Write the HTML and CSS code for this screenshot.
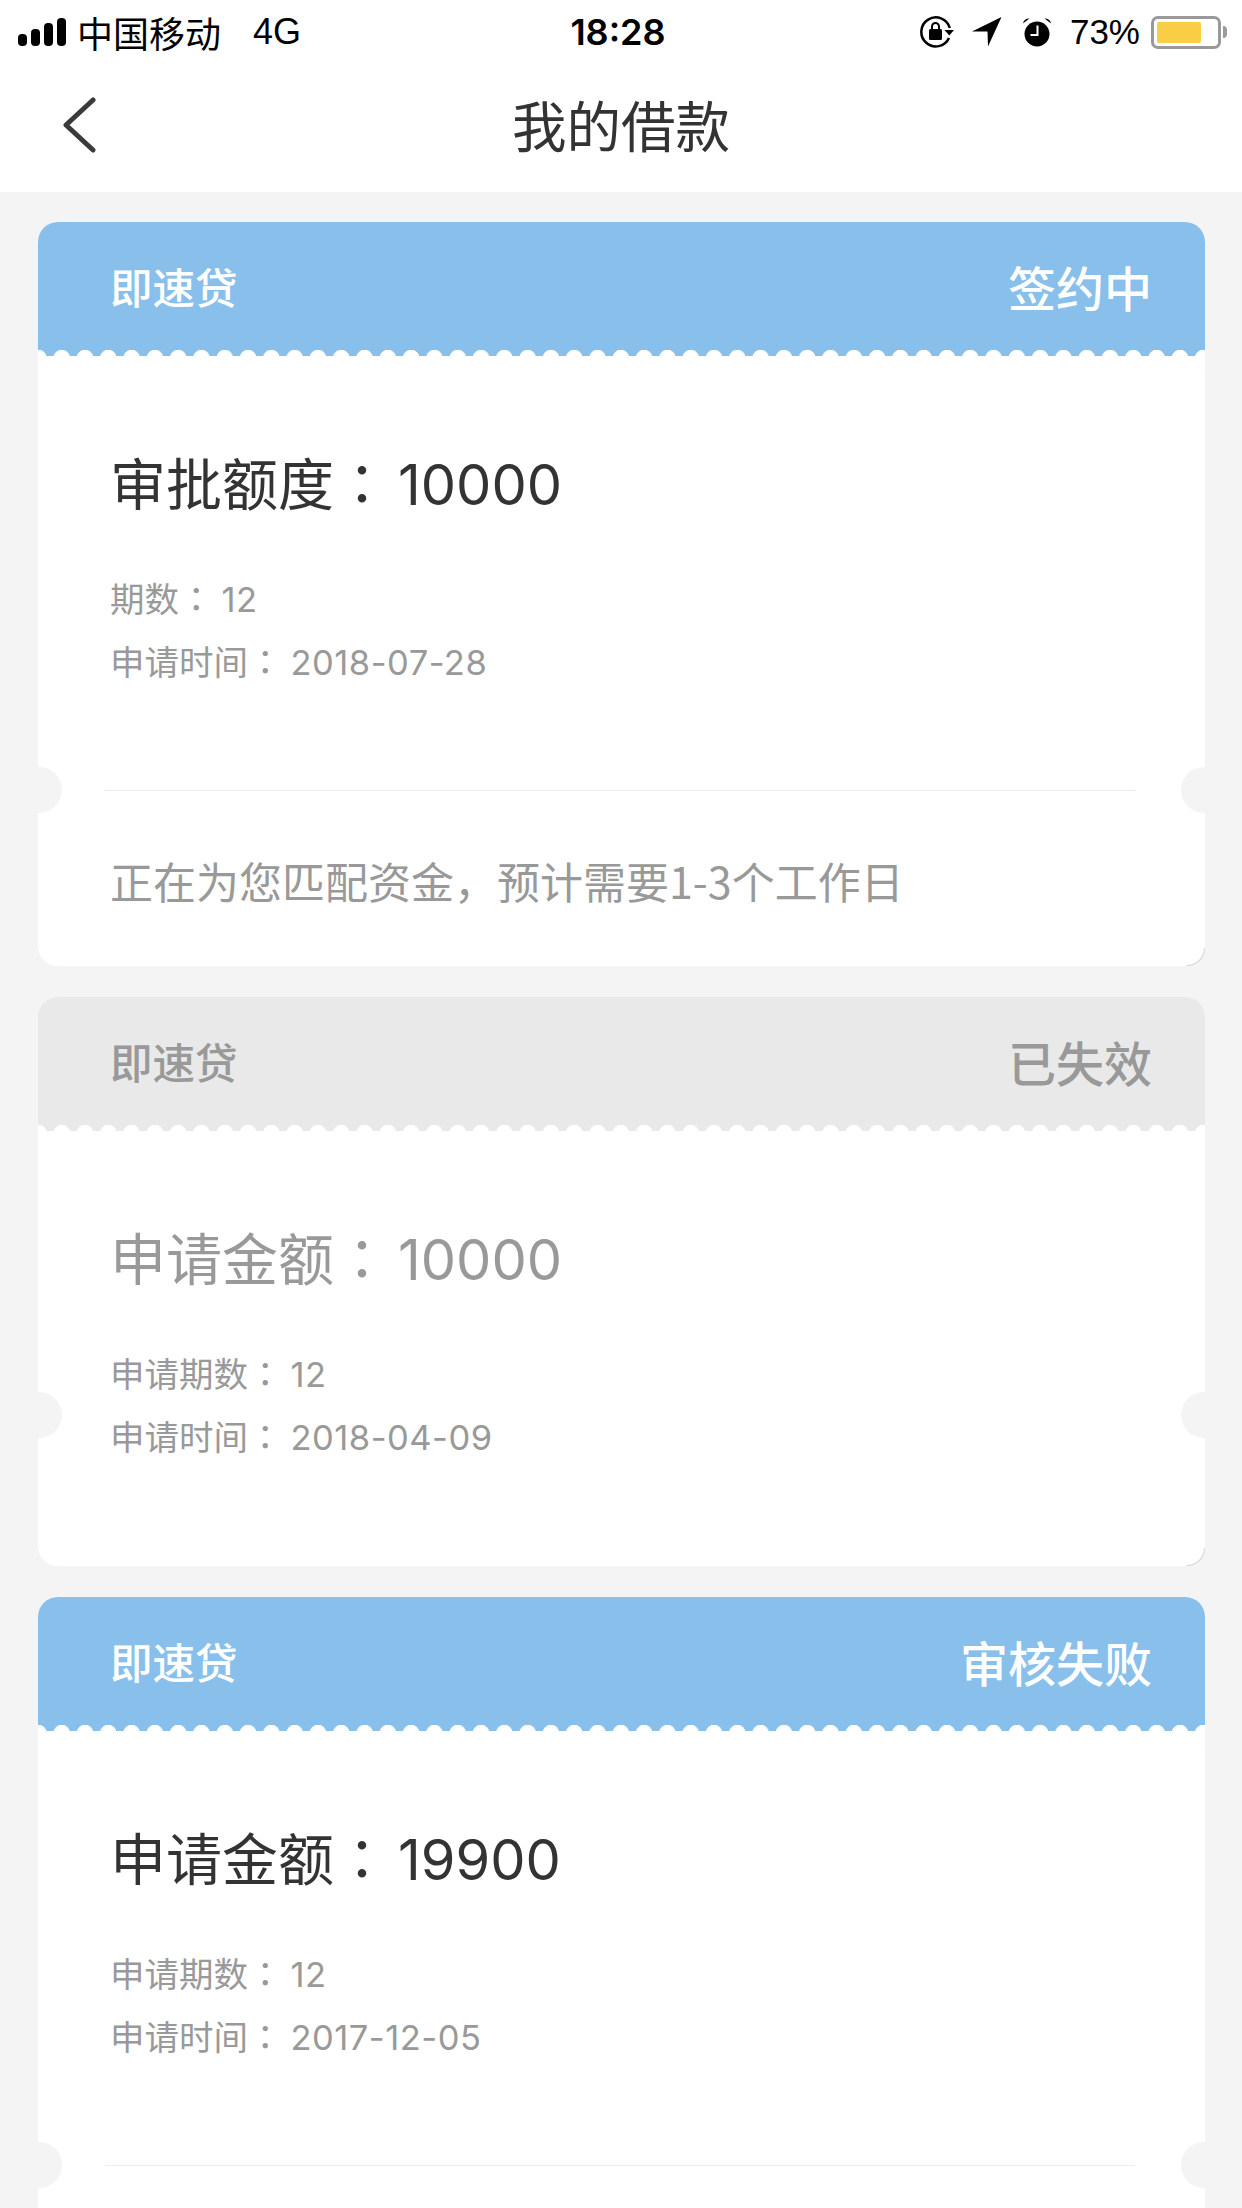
FILE: index.html
```html
<!DOCTYPE html>
<html>
<head>
    <title>我的借款</title>
    <meta charset="utf-8">
    <link rel="stylesheet" href="styles.css">
</head>
<body>
    <div class="status-bar">
        <div class="status-left">
            <svg class="signal" width="48" height="28" viewBox="0 0 48 28">
                <rect x="0" y="16" width="9" height="12" rx="4"/>
                <rect x="13" y="11" width="9" height="17" rx="4"/>
                <rect x="26" y="5" width="9" height="23" rx="4"/>
                <rect x="39" y="0" width="9" height="28" rx="4"/>
            </svg>
            <span class="carrier">中国移动</span>
            <span class="network">4G</span>
        </div>
        <div class="status-time">18:28</div>
        <div class="status-right">
            <svg class="icon-lock" width="35" height="32" viewBox="0 0 35 32">
                <path d="M29 22A14.5 14.5 0 1 1 29.800 12" fill="none" stroke="#000" stroke-width="2.500"/>
                <path d="M24.500 14h9.500l-4.700 5.500z"/>
                <rect x="9" y="13" width="13" height="11" rx="1.500"/>
                <path d="M12 14V10.500a3.500 3.500 0 0 1 7 0V14" fill="none" stroke="#000" stroke-width="2"/>
            </svg>
            <svg class="icon-arrow" width="30" height="30" viewBox="0 0 30 30">
                <path d="M0 14.500 29.500 0 16 29.500 15.500 14.500z"/>
            </svg>
            <svg class="icon-alarm" width="30" height="30" viewBox="0 0 30 30">
                <circle cx="15" cy="17" r="12.500"/>
                <path d="M1 6.500Q2 1.500 7.500 1.500zM29 6.500Q28 1.500 22.500 1.500z"/>
                <path d="M15.500 8.500V18H8.500" fill="none" stroke="#fff" stroke-width="2"/>
            </svg>
            <span class="battery-text">73%</span>
            <div class="battery">
                <div class="battery-fill"></div>
            </div>
            <div class="battery-nub"></div>
        </div>
    </div>

    <div class="nav-bar">
        <svg class="back" width="34" height="56" viewBox="0 0 34 56">
            <path d="M30 3 3 28 30 53" fill="none" stroke="#3a3a3a" stroke-width="5" stroke-linecap="round" stroke-linejoin="round"/>
        </svg>
        <h1>我的借款</h1>
    </div>

    <div class="list">
        <div class="card">
            <div class="card-head">
                <span class="product">即速贷</span>
                <span class="state">签约中</span>
            </div>
            <div class="card-main">
                <p class="amount">审批额度<span class="colon">：</span><span class="num">10000</span></p>
                <p class="meta">期数<span class="colon">：</span><span class="num">12</span></p>
                <p class="meta">申请时间<span class="colon">：</span><span class="num">2018-07-28</span></p>
            </div>
            <div class="tear"><div class="tear-line"></div></div>
            <div class="card-foot">正在为您匹配资金，预计需要1-3个工作日</div>
        </div>

        <div class="card off">
            <div class="card-head">
                <span class="product">即速贷</span>
                <span class="state">已失效</span>
            </div>
            <div class="card-main short">
                <p class="amount">申请金额<span class="colon">：</span><span class="num">10000</span></p>
                <p class="meta">申请期数<span class="colon">：</span><span class="num">12</span></p>
                <p class="meta">申请时间<span class="colon">：</span><span class="num">2018-04-09</span></p>
            </div>
            <div class="tear"></div>
            <div class="card-foot empty"></div>
        </div>

        <div class="card">
            <div class="card-head">
                <span class="product">即速贷</span>
                <span class="state">审核失败</span>
            </div>
            <div class="card-main">
                <p class="amount">申请金额<span class="colon">：</span><span class="num">19900</span></p>
                <p class="meta">申请期数<span class="colon">：</span><span class="num">12</span></p>
                <p class="meta">申请时间<span class="colon">：</span><span class="num">2017-12-05</span></p>
            </div>
            <div class="tear"><div class="tear-line"></div></div>
            <div class="card-foot"></div>
        </div>
    </div>
</body>
</html>
```

FILE: styles.css
```css
html, body {
    margin: 0;
    padding: 0;
}

body {
    width: 1242px;
    height: 2208px;
    overflow: hidden;
    background-color: #f4f4f4;
    font-family: "Noto Sans CJK SC", "Liberation Sans", sans-serif;
    color: #333;
}

/* status bar */
.status-bar {
    display: flex;
    align-items: center;
    justify-content: space-between;
    height: 64px;
    padding: 0 15px 0 18px;
    background-color: #fff;
    color: #000;
    position: relative;
}

.status-left {
    display: flex;
    align-items: center;
}

.carrier {
    font-size: 36px;
    line-height: 60px;
    margin-left: 11px;
}

.network {
    font-family: "Liberation Sans", sans-serif;
    font-size: 36px;
    margin-left: 32px;
}

.status-time {
    position: absolute;
    left: 0;
    right: 0;
    text-align: center;
    font-family: "Inter", "Liberation Sans", sans-serif;
    font-weight: 600;
    font-size: 36px;
    padding-right: 6px;
}

.status-right {
    display: flex;
    align-items: center;
}

.icon-arrow {
    margin-left: 17px;
}

.icon-alarm {
    margin-left: 20px;
}

.battery-text {
    font-family: "Liberation Sans", sans-serif;
    font-size: 35px;
    margin-left: 18px;
}

.battery {
    width: 70px;
    height: 33px;
    box-sizing: border-box;
    border: 3px solid #999;
    border-radius: 7px;
    padding: 3px;
    margin-left: 11px;
    background-color: #fff;
}

.battery-fill {
    width: 44px;
    height: 100%;
    background-color: #f9cd46;
    border-radius: 2px;
}

.battery-nub {
    width: 4px;
    height: 12px;
    margin-left: 2px;
    background-color: #999;
    border-radius: 0 4px 4px 0;
}

/* nav */
.nav-bar {
    position: relative;
    display: flex;
    align-items: center;
    justify-content: center;
    height: 128px;
    padding-bottom: 8px;
    box-sizing: border-box;
    background-color: #fff;
}

.back {
    position: absolute;
    left: 63px;
    top: 33px;
}

.nav-bar h1 {
    margin: 0;
    font-size: 54.500px;
    line-height: 70px;
    font-weight: normal;
    color: #333;
}

/* cards */
.list {
    display: flex;
    flex-direction: column;
    gap: 31px;
    padding: 30px 37px 0 38px;
}

.card {
    position: relative;
    background-color: #fff;
    border-radius: 20px;
    flex-shrink: 0;
}

.card::after {
    content: "";
    position: absolute;
    right: 0;
    bottom: 0;
    width: 18px;
    height: 18px;
    box-sizing: border-box;
    border-right: 1px solid #d4d4d4;
    border-bottom: 1px solid #d4d4d4;
    border-radius: 0 0 20px 0;
}

.card-head {
    display: flex;
    align-items: center;
    justify-content: space-between;
    height: 134px;
    box-sizing: border-box;
    padding: 0 53px 6px 72px;
    background-color: #88bfeb;
    border-radius: 20px 20px 0 0;
    color: #fff;
    /* white scallops along the bottom edge */
    background-image: radial-gradient(circle at 11.700px 8px, #fff 8px, transparent 8.500px);
    background-size: 23.300px 6px;
    background-position: 12px 100%;
    background-repeat: repeat-x;
}

.product {
    font-size: 42.500px;
    font-weight: 500;
    line-height: 1;
}

.state {
    font-size: 48px;
    font-weight: 500;
    line-height: 1;
}

.card-main {
    height: 434px;
    box-sizing: border-box;
    padding: 89px 0 0 72px;
}

.card-main.short {
    height: 284px;
}

.amount {
    margin: 0 0 49px;
    font-size: 56px;
    line-height: 72px;
    color: #333;
}

.meta {
    margin: 0;
    font-size: 34.500px;
    line-height: 63px;
    color: #999;
}

.colon {
    font-family: "Noto Sans CJK TC", sans-serif;
    line-height: 1;
}

.num {
    font-family: "Inter", "Liberation Sans", sans-serif;
    line-height: 1;
    margin-left: 8px;
}

.meta .num {
    font-size: 34.500px;
    letter-spacing: 0.500px;
}

.card-foot {
    height: 176px;
    box-sizing: border-box;
    padding: 60px 0 0 72px;
    font-size: 43px;
    line-height: 60px;
    color: #999;
}

.card-foot.empty {
    height: 151px;
}

/* tear line with notches on both sides */
.tear {
    position: relative;
    height: 0;
}

.tear::before,
.tear::after {
    content: "";
    position: absolute;
    top: -23px;
    width: 46px;
    height: 46px;
    border-radius: 50%;
    background-color: #f4f4f4;
}

.tear::before {
    left: -22px;
}

.tear::after {
    right: -22px;
}

.tear-line {
    height: 1px;
    margin: 0 70px 0 67px;
    background-color: #ececec;
}

/* expired card */
.off .card-head {
    background-color: #e9e9e9;
    color: #999;
}

.off .amount {
    color: #999;
}
```
